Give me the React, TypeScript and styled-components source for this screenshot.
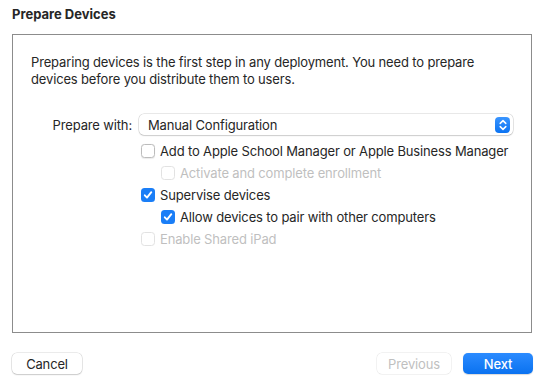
import styled, { createGlobalStyle } from 'styled-components'

const GlobalStyle = createGlobalStyle`
  body {
    margin: 0;
    background: #ffffff;
    font-family: Inter, "Liberation Sans", Arial, sans-serif;
    -webkit-font-smoothing: antialiased;
  }
`

type Option = {
  label: string
  checked?: boolean
  disabled?: boolean
  level: number
}

const options: Option[] = [
  { label: 'Add to Apple School Manager or Apple Business Manager', level: 0 },
  { label: 'Activate and complete enrollment', level: 1, disabled: true },
  { label: 'Supervise devices', level: 0, checked: true },
  { label: 'Allow devices to pair with other computers', level: 1, checked: true },
  { label: 'Enable Shared iPad', level: 0, disabled: true },
]

const CheckMark = () => (
  <svg width="10" height="10" viewBox="0 0 10 10">
    <path d="M1.8 5.3 L4 7.6 L8.3 2.2" fill="none" stroke="#fff" strokeWidth="1.9" strokeLinecap="round" strokeLinejoin="round" />
  </svg>
)

const Stepper = () => (
  <svg width="8" height="12" viewBox="0 0 8 12">
    <path d="M1.2 4.4 L4 1.6 L6.8 4.4 M1.2 7.6 L4 10.4 L6.8 7.6" fill="none" stroke="#fff" strokeWidth="1.5" strokeLinecap="round" strokeLinejoin="round" />
  </svg>
)

export default function App() {
  return (
    <Page>
      <GlobalStyle />
      <Title>Prepare Devices</Title>
      <Panel>
        <Intro>
          Preparing devices is the first step in any deployment. You need to prepare devices before you distribute them
          to users.
        </Intro>
        <FieldRow>
          <FieldLabel>Prepare with:</FieldLabel>
          <Popup>
            <span>Manual Configuration</span>
            <PopupArrow>
              <Stepper />
            </PopupArrow>
          </Popup>
        </FieldRow>
        <OptionList>
          {options.map((o) => (
            <OptionRow key={o.label} $level={o.level} $disabled={o.disabled}>
              <Box $checked={o.checked} $disabled={o.disabled}>
                {o.checked && <CheckMark />}
              </Box>
              {o.label}
            </OptionRow>
          ))}
        </OptionList>
      </Panel>
      <Footer>
        <Button $width={70}>Cancel</Button>
        <ButtonGroup>
          <Button $width={74} $disabled>
            Previous
          </Button>
          <Button $width={70} $primary>
            Next
          </Button>
        </ButtonGroup>
      </Footer>
    </Page>
  )
}

const Page = styled.div`
  box-sizing: border-box;
  width: 544px;
  height: 386px;
  padding: 6px 11px 0 12px;
  display: flex;
  flex-direction: column;
  color: #262626;
  font-size: 13px;
  letter-spacing: -0.15px;
`

const Title = styled.div`
  font-weight: 700;
  font-size: 13px;
  line-height: 16px;
  letter-spacing: 0;
  margin-bottom: 12px;
`

const Panel = styled.div`
  box-sizing: border-box;
  width: 520px;
  height: 299px;
  border: 1px solid #8c8c8c;
  padding: 19px 18px 0 18px;
`

const Intro = styled.p`
  margin: 0;
  line-height: 17px;
`

const FieldRow = styled.div`
  display: flex;
  align-items: center;
  gap: 7px;
  margin-top: 26px;
`

const FieldLabel = styled.div`
  width: 101px;
  text-align: right;
`

const Popup = styled.div`
  flex: 1;
  box-sizing: border-box;
  height: 21px;
  display: flex;
  align-items: center;
  justify-content: space-between;
  padding: 0 3px 0 9px;
  border-radius: 5px;
  background: #fff;
  box-shadow: 0 0 0 0.5px rgba(0, 0, 0, 0.18), 0 1px 1.5px rgba(0, 0, 0, 0.12);
`

const PopupArrow = styled.div`
  width: 15px;
  height: 16px;
  border-radius: 4px;
  background: linear-gradient(#3a95ff, #0b73f2);
  display: flex;
  align-items: center;
  justify-content: center;
`

const OptionList = styled.div`
  display: flex;
  flex-direction: column;
  margin-top: 5.5px;
  padding-left: 110px;
`

const OptionRow = styled.div<{ $level: number; $disabled?: boolean }>`
  height: 21.9px;
  display: flex;
  align-items: center;
  gap: 5px;
  margin-left: ${(p) => p.$level * 20}px;
  color: ${(p) => (p.$disabled ? '#bfbfbf' : '#262626')};
`

const Box = styled.span<{ $checked?: boolean; $disabled?: boolean }>`
  box-sizing: border-box;
  width: 14px;
  height: 14px;
  border-radius: 3.5px;
  display: flex;
  align-items: center;
  justify-content: center;
  background: ${(p) => (p.$checked ? '#1a7ef7' : '#fff')};
  border: ${(p) => (p.$checked ? 'none' : `1px solid ${p.$disabled ? '#e2e2e2' : '#bcbcbc'}`)};
  box-shadow: ${(p) => (p.$disabled || p.$checked ? 'none' : '0 0.5px 1px rgba(0,0,0,0.08)')};
`

const Footer = styled.div`
  display: flex;
  justify-content: space-between;
  margin-top: 20px;
`

const ButtonGroup = styled.div`
  display: flex;
  gap: 12px;
`

const Button = styled.div<{ $width: number; $primary?: boolean; $disabled?: boolean }>`
  box-sizing: border-box;
  width: ${(p) => p.$width}px;
  height: 21px;
  border-radius: 5px;
  display: flex;
  align-items: center;
  justify-content: center;
  font-size: 13px;
  background: ${(p) => (p.$primary ? 'linear-gradient(#2b8bff, #0a72f0)' : '#fff')};
  color: ${(p) => (p.$primary ? '#fff' : p.$disabled ? '#bfbfbf' : '#262626')};
  font-weight: ${(p) => (p.$primary ? 500 : 400)};
  box-shadow: ${(p) =>
    p.$primary
      ? '0 0.5px 1px rgba(0,0,0,0.15)'
      : p.$disabled
        ? '0 0 0 0.5px rgba(0,0,0,0.1)'
        : '0 0 0 0.5px rgba(0,0,0,0.16), 0 1px 1.5px rgba(0,0,0,0.14)'};
`
